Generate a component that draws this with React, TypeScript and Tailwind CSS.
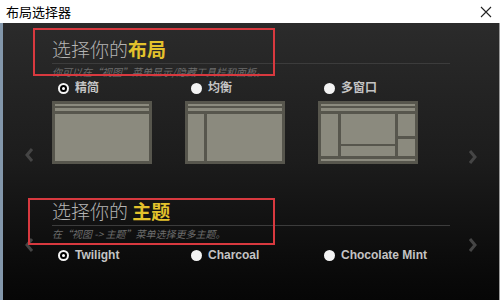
import React from 'react';

const CJK = "font-['Noto_Sans_CJK_SC','Noto_Sans',sans-serif]";
const LATIN = "font-['Liberation_Sans','Noto_Sans_CJK_SC',sans-serif]";

function Radio({ checked, label }: { checked?: boolean; label: string }) {
  return (
    <div className="flex items-center gap-[6px] pl-[6px] w-[133px]">
      <span className="flex h-[11px] w-[11px] items-center justify-center rounded-full bg-[#f4f4f4]">
        {checked && (
          <span className="flex h-[7px] w-[7px] items-center justify-center rounded-full bg-black">
            <span className="h-[3px] w-[3px] rounded-full bg-white" />
          </span>
        )}
      </span>
      <span className={`${LATIN} text-[12px] font-bold leading-[14px] text-[#c4c4c4]`}>{label}</span>
    </div>
  );
}

function TopBars() {
  return (
    <div className="flex flex-col gap-[2px]">
      <div className="h-[2px] bg-[#8b8a7e]" />
      <div className="h-[3px] bg-[#8b8a7e]" />
    </div>
  );
}

function Thumb({ kind }: { kind: 'simple' | 'balanced' | 'multi' }) {
  return (
    <div className="flex h-[63px] w-[100px] flex-col gap-[3px] bg-[#57564d] p-[3px]">
      <TopBars />
      {kind === 'simple' && <div className="flex-1 bg-[#8b8a7e]" />}
      {kind === 'balanced' && (
        <div className="flex flex-1 gap-[3px]">
          <div className="w-[16px] bg-[#8b8a7e]" />
          <div className="flex-1 bg-[#8b8a7e]" />
        </div>
      )}
      {kind === 'multi' && (
        <>
          <div className="flex flex-1 gap-[3px]">
            <div className="w-[17px] bg-[#8b8a7e]" />
            <div className="flex flex-1 flex-col gap-[2px]">
              <div className="flex-1 bg-[#8b8a7e]" />
              <div className="h-[10px] bg-[#8b8a7e]" />
            </div>
            <div className="flex w-[17px] flex-col gap-[3px]">
              <div className="flex-1 bg-[#8b8a7e]" />
              <div className="h-[17px] bg-[#8b8a7e]" />
            </div>
          </div>
          <div className="h-[2px] bg-[#8b8a7e]" />
        </>
      )}
    </div>
  );
}

function Chevron({ dir }: { dir: 'left' | 'right' }) {
  return (
    <svg width="9" height="14" viewBox="0 0 9 14">
      <path
        d={dir === 'left' ? 'M7 1 L2 7 L7 13' : 'M2 1 L7 7 L2 13'}
        fill="none"
        stroke="#454545"
        strokeWidth="3"
      />
    </svg>
  );
}

function Heading({ plain, accent, sub }: { plain: string; accent: string; sub: string }) {
  return (
    <div className={CJK}>
      <div className="text-[19px] leading-[22px] font-light text-[#b4b4b4]">
        {plain}
        <span className="font-bold text-[#e3c22c]">{accent}</span>
      </div>
      <div className="mt-[3px] h-px w-[398px] bg-[#3c3c3c]" />
      <div className="mt-px text-[10px] italic leading-[13px] text-[#6c6c6c]">{sub}</div>
    </div>
  );
}

export default function App() {
  return (
    <div className={`${CJK} flex h-[300px] w-[500px] flex-col overflow-hidden bg-white`}>
      <div className="flex h-[23px] items-center justify-between bg-white pl-[6px] pr-[8px]">
        <span className="text-[13px] leading-none text-black">布局选择器</span>
        <svg width="12" height="12" viewBox="0 0 12 12">
          <path d="M1 1 L11 11 M11 1 L1 11" stroke="#222" strokeWidth="1.1" />
        </svg>
      </div>
      <div className="relative flex-1 border-l-[3px] border-r border-l-[#8397ab] border-r-[#9a9a9a] bg-gradient-to-b from-[#2b2b2b] via-[#1c1c1c] to-[#060606]">
        <div className="absolute left-[30px] top-[5px] h-[48px] w-[242px] border-2 border-[#d8393f]" />
        <div className="absolute left-[25px] top-[175px] h-[47px] w-[247px] border-2 border-[#d8393f]" />

        <div className="flex">
          <div className="flex w-[49px] justify-center pt-[125px] pl-[4px]">
            <Chevron dir="left" />
          </div>
          <div className="flex flex-col pt-[15px]">
            <Heading plain="选择你的" accent="布局" sub="你可以在“视图”菜单显示/隐藏工具栏和面板。" />
            <div className="mt-[3px] flex">
              <Radio checked label="精简" />
              <Radio label="均衡" />
              <Radio label="多窗口" />
            </div>
            <div className="mt-[6px] flex gap-[33px]">
              <Thumb kind="simple" />
              <Thumb kind="balanced" />
              <Thumb kind="multi" />
            </div>
          </div>
          <div className="flex flex-1 justify-center pt-[127px] pr-[6px]">
            <Chevron dir="right" />
          </div>
        </div>

        <div className="flex">
          <div className="flex w-[49px] justify-center pt-[74px] pl-[4px]">
            <Chevron dir="left" />
          </div>
          <div className="flex flex-col pt-[36px]">
            <Heading plain="选择你的 " accent="主题" sub="在“视图 -> 主题”菜单选择更多主题。" />
            <div className="mt-[8px] flex">
              <Radio checked label="Twilight" />
              <Radio label="Charcoal" />
              <Radio label="Chocolate Mint" />
            </div>
          </div>
          <div className="flex flex-1 justify-center pt-[74px] pr-[6px]">
            <Chevron dir="right" />
          </div>
        </div>
      </div>
    </div>
  );
}
